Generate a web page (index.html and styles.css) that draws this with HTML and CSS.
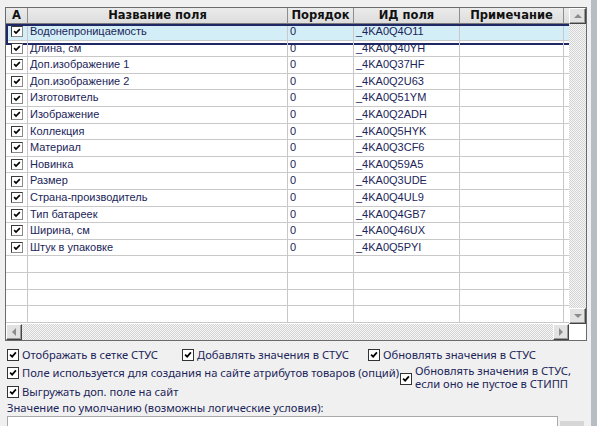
FILE: index.html
```html
<!DOCTYPE html>
<html lang="ru">
<head>
<meta charset="utf-8">
<title>Дополнительные поля</title>
<link rel="stylesheet" href="styles.css">
</head>
<body>
<div class="window">
  <div class="panel">
    <div class="grid-box">
      <div class="table">
        <div class="row head">
          <div class="cell c-a">А</div>
          <div class="cell c-name">Название поля</div>
          <div class="cell c-ord">Порядок</div>
          <div class="cell c-id">ИД поля</div>
          <div class="cell c-note">Примечание</div>
          <div class="cell c-rest"></div>
        </div>
        <div class="rows" id="rows"></div>
      </div>
      <div class="vscroll">
        <div class="sbtn"><span class="arr up"></span></div>
        <div class="track"></div>
        <div class="sbtn"><span class="arr down"></span></div>
      </div>
      <div class="hscroll">
        <div class="sbtn"><span class="arr left"></span></div>
        <div class="track"></div>
        <div class="sbtn"><span class="arr right"></span></div>
      </div>
      <div class="corner"></div>
    </div>

    <div class="options">
      <div class="opt-line">
        <label class="opt w1"><span class="box"><svg viewBox="0 0 12 12"><path d="M2.5 5.5 L5 8 L9.5 2.8" /></svg></span>Отображать в сетке СТУС</label>
        <label class="opt w2"><span class="box"><svg viewBox="0 0 12 12"><path d="M2.5 5.5 L5 8 L9.5 2.8" /></svg></span>Добавлять значения в СТУС</label>
        <label class="opt"><span class="box"><svg viewBox="0 0 12 12"><path d="M2.5 5.5 L5 8 L9.5 2.8" /></svg></span>Обновлять значения в СТУС</label>
      </div>
      <div class="opt-line two">
        <label class="opt w3"><span class="box"><svg viewBox="0 0 12 12"><path d="M2.5 5.5 L5 8 L9.5 2.8" /></svg></span>Поле используется для создания на сайте атрибутов товаров (опций)</label>
        <label class="opt multi"><span class="box"><svg viewBox="0 0 12 12"><path d="M2.5 5.5 L5 8 L9.5 2.8" /></svg></span><span>Обновлять значения в СТУС,<br>если оно не пустое в СТИПП</span></label>
      </div>
      <div class="opt-line">
        <label class="opt"><span class="box"><svg viewBox="0 0 12 12"><path d="M2.5 5.5 L5 8 L9.5 2.8" /></svg></span>Выгружать доп. поле на сайт</label>
      </div>
      <div class="caption">Значение по умолчанию (возможны логические условия):</div>
      <div class="value-line">
        <div class="textbox"></div>
        <div class="pick"></div>
      </div>
    </div>
  </div>
  <div class="edge"></div>
</div>
<script src="app.js"></script>
</body>
</html>
```

FILE: app.js
```js
// Список дополнительных полей товара
var fields = [
  ["Водонепроницаемость", "0", "_4KA0Q4O11"],
  ["Длина, см", "0", "_4KA0Q40YH"],
  ["Доп.изображение 1", "0", "_4KA0Q37HF"],
  ["Доп.изображение 2", "0", "_4KA0Q2U63"],
  ["Изготовитель", "0", "_4KA0Q51YM"],
  ["Изображение", "0", "_4KA0Q2ADH"],
  ["Коллекция", "0", "_4KA0Q5HYK"],
  ["Материал", "0", "_4KA0Q3CF6"],
  ["Новинка", "0", "_4KA0Q59A5"],
  ["Размер", "0", "_4KA0Q3UDE"],
  ["Страна-производитель", "0", "_4KA0Q4UL9"],
  ["Тип батареек", "0", "_4KA0Q4GB7"],
  ["Ширина, см", "0", "_4KA0Q46UX"],
  ["Штук в упаковке", "0", "_4KA0Q5PYI"]
];
var EMPTY_ROWS = 4;

var check = '<span class="gbox"><svg viewBox="0 0 11 11"><path d="M2 5 L4.3 7.4 L9 2.6"/></svg></span>';
var html = "";
fields.forEach(function (f, i) {
  html += '<div class="row' + (i === 0 ? ' current' : '') + '">' +
    '<div class="cell c-a">' + check + '</div>' +
    '<div class="cell c-name">' + f[0] + '</div>' +
    '<div class="cell c-ord">' + f[1] + '</div>' +
    '<div class="cell c-id">' + f[2] + '</div>' +
    '<div class="cell c-note"></div>' +
    '<div class="cell c-rest"></div></div>';
});
for (var k = 0; k < EMPTY_ROWS; k++) {
  html += '<div class="row">' +
    '<div class="cell c-a"></div><div class="cell c-name"></div>' +
    '<div class="cell c-ord"></div><div class="cell c-id"></div>' +
    '<div class="cell c-note"></div><div class="cell c-rest"></div></div>';
}
document.getElementById("rows").innerHTML = html;
```

FILE: styles.css
```css
* { box-sizing: border-box; }

html, body {
  margin: 0;
  padding: 0;
  height: 100%;
  overflow: hidden;
}

body {
  background: #f0f0f0;
  font-family: "Liberation Sans", Arial, sans-serif;
  color: #1b2559;
}

.window {
  display: flex;
  height: 100%;
}

.panel {
  flex: 1;
  padding: 7px 0 0 5px;
  display: flex;
  flex-direction: column;
}

.edge {
  width: 10px;
  background: linear-gradient(to right, #eef0f2 0 4px, #b8bcc3 4px);
}

/* ---- grid with field list ---- */
.grid-box {
  width: 582px;
  height: 334px;
  flex: none;
  border: 1px solid #6b6b6b;
  background: #fff;
  display: grid;
  grid-template-columns: 1fr 17px;
  grid-template-rows: 1fr 16px;
}

.table {
  overflow: hidden;
  background: #fff;
}

.row {
  display: grid;
  grid-template-columns: 22px 260px 66px 106px 104px 1fr;
  height: 16.6px;
  position: relative;
}

.cell {
  border-right: 1px solid #c9c9c9;
  border-bottom: 1px solid #c9c9c9;
  font-size: 11px;
  line-height: 15px;
  padding-left: 2px;
  white-space: nowrap;
  overflow: hidden;
}

.c-rest { border-right: none; }

.row.head {
  height: 16px;
  background: linear-gradient(#ebebeb, #dcdcdc);
}

.row.head .cell {
  border-right: 1px solid #8e8e8e;
  border-bottom: 1px solid #7a7a7a;
  font-family: "DejaVu Sans", Verdana, sans-serif;
  font-weight: bold;
  font-size: 11.5px;
  line-height: 15px;
  color: #111;
  text-align: center;
  padding-left: 0;
}

.row.head .c-rest { border-right: none; }

.c-a { padding-left: 0; display: flex; justify-content: center; align-items: center; }
.row.head .c-a { display: block; }

.row.current {
  background: #d4eef7;
}

.row.current::after {
  content: "";
  position: absolute;
  left: 0;
  top: 0;
  width: 562px;
  height: 17px;
  border: 2px solid #1f2764;
  pointer-events: none;
}

.gbox {
  width: 12px;
  height: 11px;
  border: 1px solid #3a3a3a;
  border-right-color: #8a8a8a;
  border-bottom-color: #8a8a8a;
  background: #fff;
  display: block;
}

.gbox svg {
  display: block;
  width: 10px;
  height: 9px;
}

.gbox path, .box path {
  fill: none;
  stroke: #000;
  stroke-width: 2;
}

/* ---- scrollbars ---- */
.vscroll, .hscroll {
  display: flex;
}

.vscroll { flex-direction: column; }

.track {
  flex: 1;
  background-color: #f2f2f2;
  background-image: repeating-conic-gradient(#d3d3d3 0 25%, #f6f6f6 0 50%);
  background-size: 2px 2px;
}

.sbtn {
  width: 17px;
  height: 16px;
  background: #e2e2e2;
  border: 1px solid #fff;
  border-right-color: #444;
  border-bottom-color: #444;
  box-shadow: inset -1px -1px 0 #9a9a9a;
  display: flex;
  align-items: center;
  justify-content: center;
}

.hscroll .sbtn { width: 16px; }

.arr {
  width: 0;
  height: 0;
  border: 4px solid transparent;
}

.arr.up { border-bottom-color: #8c8c8c; border-top-width: 0; }
.arr.down { border-top-color: #8c8c8c; border-bottom-width: 0; }
.arr.left { border-right-color: #8c8c8c; border-left-width: 0; }
.arr.right { border-left-color: #8c8c8c; border-right-width: 0; }

.corner { background: #fff; }

/* ---- options below the grid ---- */
.options {
  padding: 5px 0 0 2px;
  font-family: "Noto Sans", "Liberation Sans", sans-serif;
  font-size: 11.2px;
  color: #1b2559;
}

.opt-line {
  display: flex;
  align-items: center;
  height: 18.5px;
}

.opt-line.two {
  align-items: flex-start;
}

.opt {
  display: flex;
  align-items: center;
  white-space: nowrap;
  line-height: 16px;
}

.w1 { width: 175px; }
.w2 { width: 186px; }
.w3 { width: 393px; }

.opt.multi {
  line-height: 13.5px;
  margin-top: -1px;
}

.opt.multi .box { margin-top: 3px; }

.box {
  width: 12px;
  height: 12px;
  border: 1px solid #333;
  background: #fff;
  margin-right: 3px;
  flex: none;
}

.box svg { display: block; width: 10px; height: 10px; }

.caption {
  height: 16px;
  line-height: 16px;
  margin-top: -2px;
}

.value-line {
  display: flex;
  align-items: flex-start;
}

.textbox {
  width: 551px;
  height: 20px;
  background: #fff;
  border: 1px solid #a9a9a9;
}

.pick {
  width: 24px;
  height: 20px;
  margin: 5px 0 0 2px;
  background: #d6d6d6;
}
```
